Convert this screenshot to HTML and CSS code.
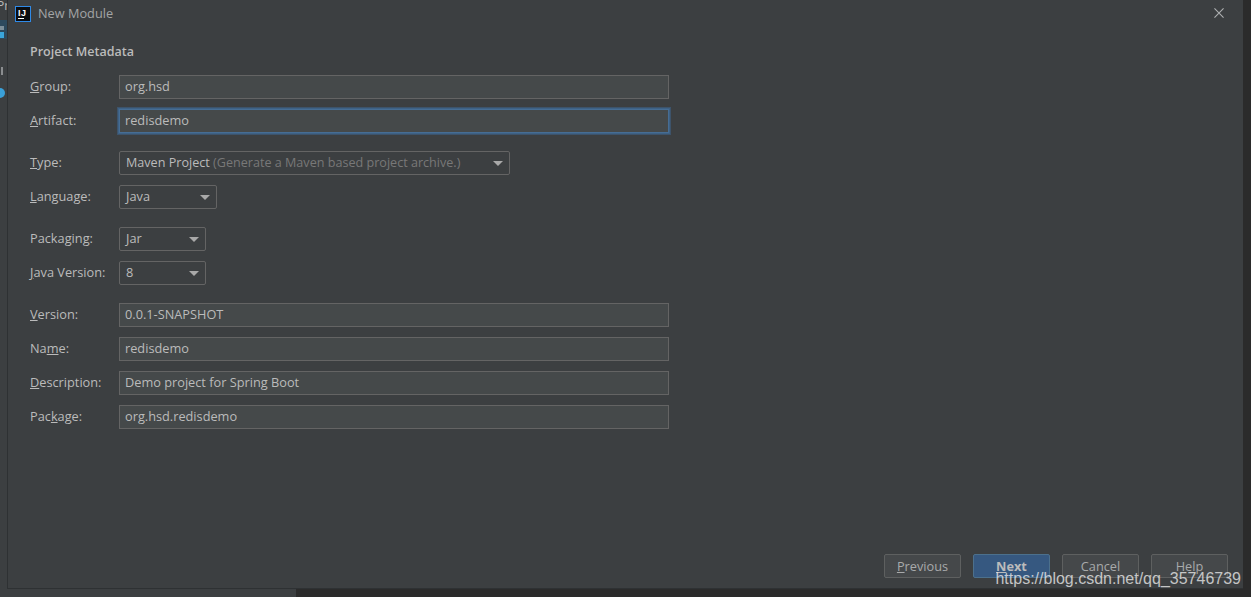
FILE: index.html
```html
<!DOCTYPE html>
<html lang="en">
<head>
<meta charset="utf-8">
<title>New Module</title>
<link rel="stylesheet" href="styles.css">
</head>
<body>
<div class="screen">
  <div class="main">
    <aside class="strip">
      <span class="strip-text">Pr</span>
      <svg class="strip-icon" width="7" height="19" viewBox="0 0 7 19"><rect x="0" y="0" width="7" height="19" fill="#2d4a5e"/><rect x="0" y="6" width="4" height="4" fill="#7d8f9a"/><rect x="0" y="12" width="4" height="6" fill="#3aa6dc"/></svg>
      <span class="strip-bar"></span>
      <span class="strip-dot"></span>
    </aside>
    <section class="dialog">
      <header class="titlebar">
        <span class="logo"><span class="logo-text">IJ</span><span class="logo-line"></span></span>
        <span class="title">New Module</span>
        <svg class="close" width="11" height="11" viewBox="0 0 11 11"><path d="M.5.5l10 10M10.500.5l-10 10" stroke="#aeb0b1" stroke-width="1.200" fill="none"/></svg>
      </header>
      <div class="content">
        <h2 class="heading">Project Metadata</h2>
        <div class="form">
          <div class="group">
            <div class="row"><label class="label"><u>G</u>roup:</label><div class="field">org.hsd</div></div>
            <div class="row"><label class="label"><u>A</u>rtifact:</label><div class="field focused">redisdemo</div></div>
          </div>
          <div class="group">
            <div class="row"><label class="label"><u>T</u>ype:</label><div class="select w-type"><span>Maven Project <span class="hint">(Generate a Maven based project archive.)</span></span><i class="arrow"></i></div></div>
            <div class="row"><label class="label"><u>L</u>anguage:</label><div class="select w-lang"><span>Java</span><i class="arrow"></i></div></div>
          </div>
          <div class="group">
            <div class="row"><label class="label">Packa<u>g</u>ing:</label><div class="select w-pack"><span>Jar</span><i class="arrow"></i></div></div>
            <div class="row"><label class="label"><u>J</u>ava Version:</label><div class="select w-pack"><span>8</span><i class="arrow"></i></div></div>
          </div>
          <div class="group">
            <div class="row"><label class="label"><u>V</u>ersion:</label><div class="field">0.0.1-SNAPSHOT</div></div>
            <div class="row"><label class="label">Na<u>m</u>e:</label><div class="field">redisdemo</div></div>
            <div class="row"><label class="label"><u>D</u>escription:</label><div class="field">Demo project for Spring Boot</div></div>
            <div class="row"><label class="label">Pac<u>k</u>age:</label><div class="field">org.hsd.redisdemo</div></div>
          </div>
        </div>
      </div>
      <footer class="actions">
        <button class="btn"><u>P</u>revious</button>
        <button class="btn primary"><u>N</u>ext</button>
        <button class="btn">Cancel</button>
        <button class="btn">Help</button>
      </footer>
    </section>
  </div>
  <div class="bottom"><span class="bottom-left"></span></div>
  <span class="watermark">https://blog.csdn.net/qq_35746739</span>
</div>
</body>
</html>
```
FILE: styles.css
```css
* { box-sizing: border-box; }
html, body { margin: 0; padding: 0; height: 100%; overflow: hidden; background: #2b2b2b; }
.screen {
  position: relative;
  width: 1251px;
  height: 597px;
  display: flex;
  flex-direction: column;
  font-family: "Open Sans", "Noto Sans", sans-serif;
  font-size: 12.75px;
  color: #bbbbbb;
}
.main { display: flex; height: 589px; }
.strip {
  width: 7px;
  background: #3c3f41;
  display: flex;
  flex-direction: column;
  align-items: flex-start;
  overflow: hidden;
  flex: none;
}
.strip-text { margin: -3px 0 0 -3px; height: 17px; line-height: 17px; font-size: 12px; width: 14px; flex: none; color: #bbbbbb; }
.strip-icon { display: block; margin-top: 6px; flex: none; }
.strip-bar { width: 2px; height: 8px; margin: 28px 0 0 1px; background: #8a8d8f; flex: none; }
.strip-dot { width: 10px; height: 10px; border-radius: 50%; margin: 13px 0 0 -5px; background: #3aa0d8; flex: none; }
.dialog {
  width: 1236px;
  flex: none;
  display: flex;
  flex-direction: column;
  background: #3c3f41;
  border-left: 1px solid #2e3133;
  border-bottom: 1px solid #2e3133;
}
.titlebar {
  height: 27px;
  display: flex;
  align-items: center;
  padding: 0 19px 0 7px;
  flex: none;
}
.logo {
  position: relative;
  width: 16px;
  height: 16px;
  flex: none;
  background: #0b0d10;
  border: 1px solid #2f8ae8;
  display: block;
}
.logo-text {
  display: block;
  font: bold 9px/8px "Liberation Sans", sans-serif;
  letter-spacing: .5px;
  color: #fff;
  padding-left: 2px;
  padding-top: 2px;
}
.logo-line { position: absolute; left: 2px; bottom: 2px; width: 6px; height: 1px; background: #fff; }
.title { margin-left: 7px; color: #a3a5a6; flex: 1; padding-bottom: 2px; }
.close { flex: none; width: 10px; height: 10px; margin-bottom: 1px; }
.content { flex: 1; padding: 0 0 0 22px; }
.heading {
  margin: 17px 0 15px;
  height: 16px;
  line-height: 16px;
  font-size: 12.5px;
  font-weight: 600;
  color: #bbbbbb;
}
.form { display: flex; flex-direction: column; gap: 18px; }
.group { display: flex; flex-direction: column; gap: 10px; }
.row { display: flex; align-items: center; height: 24px; }
.label { width: 89px; flex: none; padding-bottom: 2px; }
.field {
  width: 550px;
  height: 24px;
  line-height: 21px;
  padding: 0 5px;
  background: #45494a;
  border: 1px solid #646464;
}
.field.focused { box-shadow: 0 0 0 1px #3d6185, 0 0 0 2px #3d618599; border-color: #466d94; }
.select {
  height: 24px;
  padding: 0 6px 1px;
  display: flex;
  align-items: center;
  justify-content: space-between;
  border: 1px solid #646464;
  border-radius: 2px;
  line-height: 21px;
}
.w-type { width: 391px; font-size: 12.6px; }
.w-lang { width: 98px; }
.w-pack { width: 87px; }
.hint { color: #787878; }
.arrow {
  width: 0;
  height: 0;
  margin-top: 1px;
  border-left: 5px solid transparent;
  border-right: 5px solid transparent;
  border-top: 5px solid #a9a9a9;
  flex: none;
}
.actions {
  display: flex;
  justify-content: flex-end;
  gap: 12px;
  padding: 0 15px 10px 0;
  flex: none;
}
.btn {
  width: 77px;
  height: 24px;
  padding: 0;
  font: inherit;
  color: #a8aaab;
  background: #45484a;
  border: 1px solid #5e6060;
  border-radius: 2px;
}
.btn.primary { background: #365880; border-color: #4c708c; color: #bbbbbb; font-weight: 700; }
.bottom { flex: 1; background: #2b2b2b; display: flex; }
.bottom-left { width: 296px; background: #3c3f41; }
.watermark {
  position: absolute;
  right: 10px;
  top: 569px;
  font: 16px/20px "Liberation Sans", sans-serif;
  color: rgba(235, 235, 235, .78);
}
```
